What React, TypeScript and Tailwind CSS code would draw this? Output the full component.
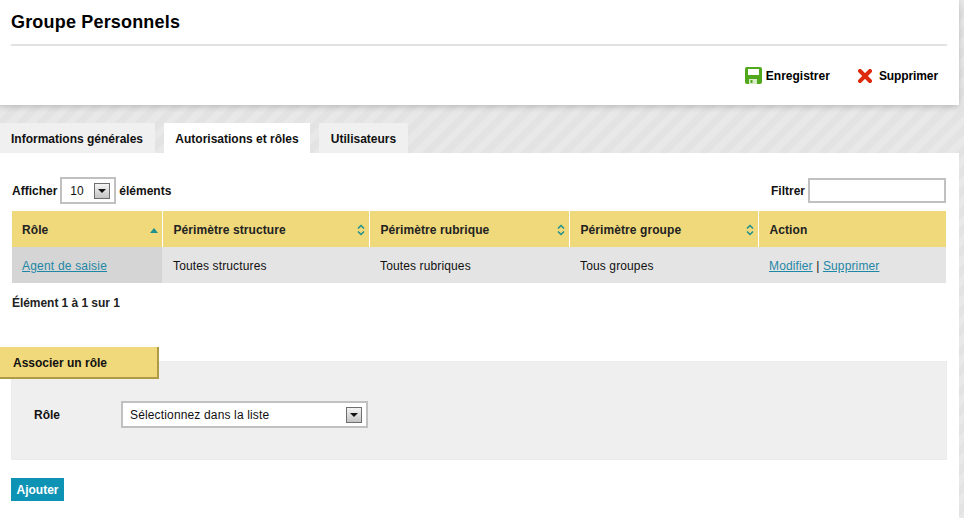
import React from 'react';

const font = 'font-["Liberation_Sans",Arial,sans-serif]';

function SortBoth() {
  return (
    <svg width="8" height="12" viewBox="0 0 8 12" className="shrink-0">
      <path d="M1 4.5 4 1.5l3 3M1 7.5l3 3 3-3" fill="none" stroke="#1f8f8f" strokeWidth="1.5" />
    </svg>
  );
}

function SortUp() {
  return (
    <svg width="8" height="5" viewBox="0 0 8 5" className="shrink-0">
      <path d="M0 5 4 0l4 5z" fill="#1f8f8f" />
    </svg>
  );
}

function SelectArrow() {
  return (
    <span className="flex h-[16px] w-[16px] items-center justify-center border border-[#6e6e6e] bg-gradient-to-b from-[#f4f4f4] to-[#c4c4c4]">
      <svg width="8" height="4" viewBox="0 0 8 4">
        <path d="M0 0h8L4 4z" fill="#111" />
      </svg>
    </span>
  );
}

const columns = [
  { label: 'Rôle', width: 'w-[150px]', sort: <SortUp /> },
  { label: 'Périmètre structure', width: 'w-[207px]', sort: <SortBoth /> },
  { label: 'Périmètre rubrique', width: 'w-[200px]', sort: <SortBoth /> },
  { label: 'Périmètre groupe', width: 'w-[189px]', sort: <SortBoth /> },
  { label: 'Action', width: 'w-[188px]', sort: null },
];

export default function App() {
  return (
    <div className={`${font} flex h-[518px] w-[964px] flex-col overflow-hidden bg-[repeating-linear-gradient(135deg,#e3e3e3_0px,#e3e3e3_7px,#e8e8e8_7px,#e8e8e8_14px)] text-[12px] text-[#111]`}>
      {/* Header */}
      <header className="h-[105px] w-[959px] bg-white px-[11px] shadow-[0_2px_6px_rgba(0,0,0,0.18)]">
        <h1 className="flex h-[44px] items-center pt-[1px] text-[18px] tracking-[0.18px] font-bold text-black">Groupe Personnels</h1>
        <div className="h-[2px] w-[936px] bg-[#e2e2e2]" />
        <div className="flex h-[58px] w-[927px] items-center justify-end gap-[28px] pt-[1px] font-bold text-black">
          <span className="flex items-center gap-[4px]">
            <svg width="17" height="17" viewBox="0 0 17 17">
              <path d="M2 0h13a2 2 0 0 1 2 2v13a2 2 0 0 1-2 2H2a2 2 0 0 1-2-2V2a2 2 0 0 1 2-2z" fill="#52a81c" />
              <rect x="3" y="2" width="11" height="6" fill="#fff" />
              <rect x="4" y="12" width="8" height="5" fill="#d8eccb" />
              <rect x="5.5" y="13" width="2" height="3" fill="#52a81c" />
            </svg>
            Enregistrer
          </span>
          <span className="flex items-center gap-[7px] tracking-[-0.1px]">
            <svg width="14" height="14" viewBox="0 0 14 14">
              <path d="M2 2l10 10M12 2 2 12" stroke="#dd2a0c" strokeWidth="4" strokeLinecap="square" />
            </svg>
            Supprimer
          </span>
        </div>
      </header>

      {/* Tabs */}
      <nav className="mt-[18px] flex h-[30px] w-[959px] gap-[9px] font-bold">
        <span className="flex w-[155px] items-center justify-center bg-[#f0f0f0] pt-[2px] pr-[1px]">Informations générales</span>
        <span className="flex w-[146px] items-center justify-center bg-white pt-[2px]">Autorisations et rôles</span>
        <span className="flex w-[89px] items-center justify-center bg-[#f0f0f0] pt-[2px]">Utilisateurs</span>
      </nav>

      {/* Content */}
      <main className="flex w-[959px] flex-1 flex-col bg-white">
        <div className="mx-[12px] mt-[24px] flex h-[27px] w-[934px] items-center justify-between font-bold">
          <div className="flex items-center gap-[3px]">
            <span>Afficher</span>
            <div className="flex h-[27px] w-[56px] items-center justify-between border-2 border-[#c0c0c0] bg-white pr-[4px] pl-[8px] font-normal">
              10
              <SelectArrow />
            </div>
            <span>éléments</span>
          </div>
          <div className="flex items-center gap-[3px]">
            <span>Filtrer</span>
            <div className="h-[25px] w-[138px] border-2 border-[#c0c0c0] bg-white" />
          </div>
        </div>

        <table className="mx-[12px] mt-[7px] w-[934px] table-fixed border-collapse">
          <thead>
            <tr className="h-[36px] bg-[#efd97b]">
              {columns.map((c, i) => (
                <th key={c.label} className={`${c.width} ${i > 0 ? 'border-l border-white pl-[11px]' : 'pl-[10px]'} pt-[2px] pr-[4px] text-left font-bold tracking-[0.08px] text-[#222]`}>
                  <span className="flex items-center justify-between">
                    {c.label}
                    {c.sort}
                  </span>
                </th>
              ))}
            </tr>
          </thead>
          <tbody>
            <tr className="h-[36px] bg-[#e4e4e4] tracking-[0.13px]">
              <td className="bg-[#d5d5d5] px-[10px] pt-[2px]">
                <a href="#" className="tracking-[0.2px] text-[#1f87a6] underline">Agent de saisie</a>
              </td>
              <td className="px-[11px] pt-[2px]">Toutes structures</td>
              <td className="px-[11px] pt-[2px]">Toutes rubriques</td>
              <td className="px-[11px] pt-[2px]">Tous groupes</td>
              <td className="px-[11px] pt-[2px]">
                <a href="#" className="text-[#1f87a6] underline">Modifier</a>
                {' | '}
                <a href="#" className="text-[#1f87a6] underline">Supprimer</a>
              </td>
            </tr>
          </tbody>
        </table>

        <p className="mx-[12px] mt-[12px] pt-[1px] leading-[15px] font-bold tracking-[-0.05px] text-[#222]">
          Élément 1 à 1 sur 1
        </p>

        {/* Associer un rôle */}
        <div className="relative z-10 mt-[36px] flex h-[32px] w-[159px] items-center border-r-2 border-b-2 border-[#b09a45] bg-[#efd97b] pt-[1px] pl-[13px] font-bold text-[#111]">
          Associer un rôle
        </div>
        <section className="mx-[11px] -mt-[18px] flex h-[99px] w-[936px] items-center border border-[#ececec] bg-[#efefef] pt-[8px] pl-[22px]">
          <label className="w-[87px] font-bold">Rôle</label>
          <div className="flex h-[27px] w-[247px] items-center justify-between border-2 border-[#c0c0c0] bg-white pr-[4px] pl-[7px] tracking-[0.15px]">
            Sélectionnez dans la liste
            <SelectArrow />
          </div>
        </section>

        <button className="mx-[11px] mt-[18px] h-[23px] w-[53px] bg-[#0e93b5] font-bold text-white">Ajouter</button>
      </main>
    </div>
  );
}
